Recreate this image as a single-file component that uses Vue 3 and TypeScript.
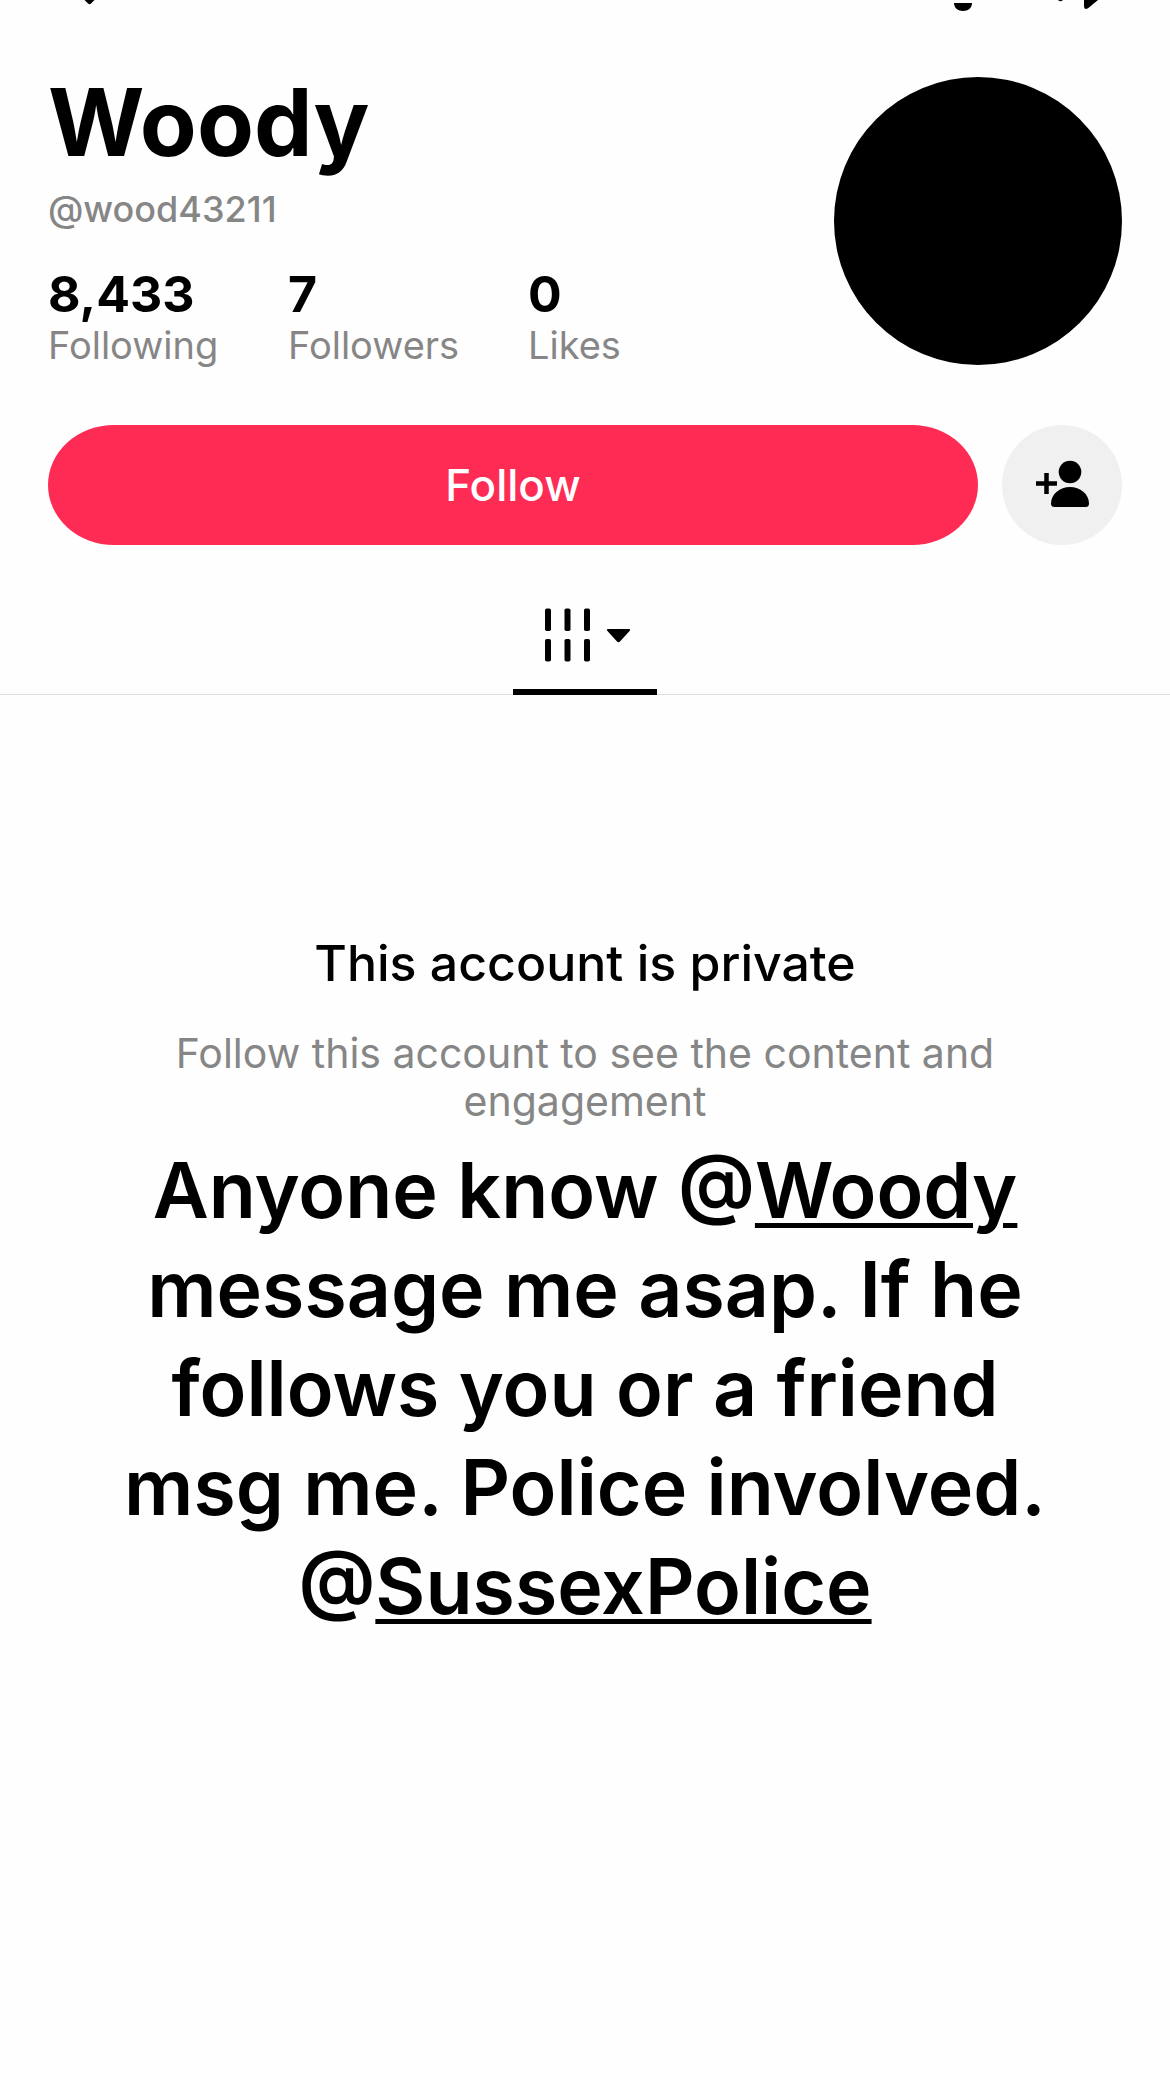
<script setup lang="ts">
interface Stat {
  value: string
  label: string
}

const stats: Stat[] = [
  { value: '8,433', label: 'Following' },
  { value: '7', label: 'Followers' },
  { value: '0', label: 'Likes' },
]
</script>

<template>
  <main class="screen">
    <nav class="topbar" aria-label="Profile navigation">
      <button type="button" class="icon-button" aria-label="Back">
        <svg width="56" height="12" viewBox="0 0 56 12">
          <path d="M36.500 0h10l-3.500 3.500q-1.500 1.500-3 0z" />
        </svg>
      </button>
      <div class="topbar-actions">
        <button type="button" class="icon-button" aria-label="Notifications">
          <svg width="48" height="12" viewBox="0 0 48 12">
            <path d="M15 3h18c0 5-4 8-9 8s-9-3-9-8z" />
          </svg>
        </button>
        <button type="button" class="icon-button" aria-label="Share">
          <svg width="84" height="12" viewBox="0 0 84 12">
            <path d="M20 0h5q-2.500 2.500-5 0zM46 0h14L50 8.300q-4 1.800-4-2z" />
          </svg>
        </button>
      </div>
    </nav>

    <header class="profile">
      <div class="identity">
        <h1 class="name">Woody</h1>
        <p class="handle">@wood43211</p>
        <ul class="stats">
          <li v-for="stat in stats" :key="stat.label">
            <a href="#" class="stat">
              <strong class="stat-value">{{ stat.value }}</strong>
              <span class="stat-label">{{ stat.label }}</span>
            </a>
          </li>
        </ul>
      </div>
      <div class="avatar" role="img" aria-label="Profile photo"></div>
    </header>

    <div class="actions">
      <button type="button" class="follow">Follow</button>
      <button type="button" class="suggest" aria-label="Suggested accounts">
        <svg width="60" height="60" viewBox="0 0 60 60">
          <path d="M14.500 18v21M4 28.500h21" stroke="#000" stroke-width="4.500" />
          <circle cx="38" cy="17" r="11.300" />
          <path d="M19 48.500C19 39 28 32 38 32s19 7 19 16.500q0 3.500-3.500 3.500h-31q-3.500 0-3.500-3.500z" />
        </svg>
      </button>
    </div>

    <div class="tabs" role="tablist">
      <button type="button" class="tab" role="tab" aria-selected="true" aria-label="Posts">
        <svg width="90" height="60" viewBox="0 0 90 60">
          <g v-for="x in [5, 24.500, 44]" :key="x">
            <rect :x="x" y="4.500" width="6" height="22.500" rx="1.800" />
            <rect :x="x" y="35" width="6" height="22.500" rx="1.800" />
          </g>
          <path d="M68 25h21q2 0 .5 2L80 37.500q-1.500 1.500-3 0L67.500 27q-1.500-2 .5-2z" />
        </svg>
      </button>
    </div>

    <section class="private">
      <h2 class="private-title">This account is private</h2>
      <p class="private-text">Follow this account to see the content and engagement</p>
    </section>

    <p class="caption">
      Anyone know @<a href="#">Woody</a><br />
      message me asap. If he<br />
      follows you or a friend<br />
      msg me. Police involved.<br />
      @<a href="#">SussexPolice</a>
    </p>
  </main>
</template>

<style>
body {
  background: #fefefe;
}
</style>

<style scoped>
.screen {
  font-family: Inter, 'Liberation Sans', sans-serif;
  color: #000;
  background: #fefefe;
  min-height: 100vh;
}

h1,
h2,
p,
ul {
  margin: 0;
  padding: 0;
}

button {
  border: 0;
  padding: 0;
  background: none;
  color: inherit;
  font-family: inherit;
  cursor: pointer;
}

svg {
  display: block;
}

.topbar,
.topbar-actions {
  display: flex;
  justify-content: space-between;
}

.topbar {
  padding: 0 48px;
}

.topbar-actions {
  gap: 51px;
}

.profile {
  display: flex;
  justify-content: space-between;
  align-items: flex-start;
  margin-top: 65px;
  padding: 0 48px;
}

.name {
  font-size: 93px;
  line-height: 90px;
  font-weight: 700;
}

.handle {
  margin-top: 20px;
  font-size: 36px;
  line-height: 44px;
  font-weight: 500;
  color: #868686;
}

.stats {
  display: grid;
  grid-template-columns: repeat(3, 240px);
  margin-top: 36px;
  list-style: none;
}

.stat {
  display: flex;
  flex-direction: column;
  color: inherit;
  text-decoration: none;
}

.stat-value {
  font-size: 50px;
  line-height: 54px;
  font-weight: 700;
}

.stat-label {
  font-size: 38px;
  line-height: 48px;
  color: #868686;
}

.avatar {
  flex: none;
  width: 288px;
  height: 288px;
  border-radius: 50%;
  background: #000;
}

.actions {
  display: flex;
  gap: 24px;
  margin-top: 56px;
  padding: 0 48px;
}

.follow {
  flex: 1;
  height: 120px;
  border-radius: 66px / 60px;
  background: #fe2c55;
  color: #fff;
  font-size: 44px;
  font-weight: 500;
}

.suggest {
  display: grid;
  place-items: center;
  width: 120px;
  height: 120px;
  border-radius: 50%;
  background: #f0f0f0;
}

.tabs {
  display: flex;
  justify-content: center;
  margin-top: 59px;
  border-bottom: 1px solid #dedede;
}

.tab {
  display: flex;
  justify-content: center;
  width: 144px;
  height: 91px;
  margin-bottom: -1px;
  border-bottom: 6px solid #000;
}

.private {
  max-width: 880px;
  margin: 0 auto;
  padding-top: 238px;
  text-align: center;
}

.private-title {
  font-size: 50px;
  line-height: 60px;
  font-weight: 500;
}

.private-text {
  margin-top: 36px;
  font-size: 41px;
  line-height: 48px;
  color: #868686;
}

.caption {
  margin-top: 16px;
  text-align: center;
  font-size: 77px;
  line-height: 99px;
  font-weight: 600;
}

.caption a {
  color: inherit;
  text-decoration: underline;
  text-decoration-thickness: 5px;
  text-underline-offset: 5px;
}
</style>
